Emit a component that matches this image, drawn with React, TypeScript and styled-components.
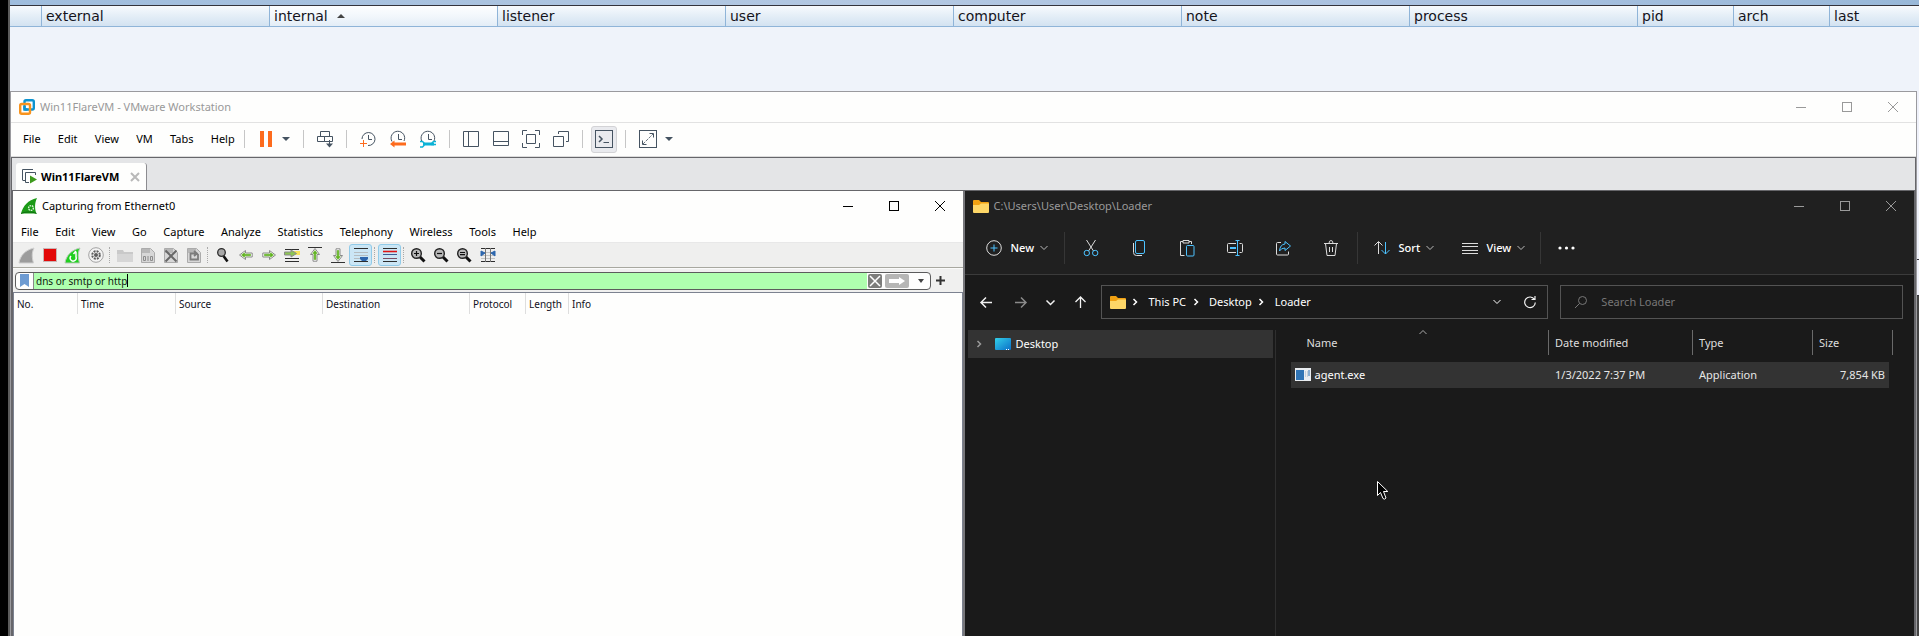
import React from "react";
import styled, { createGlobalStyle, css } from "styled-components";

const GlobalStyle = createGlobalStyle`
  * { box-sizing: border-box; }
  body { margin: 0; background: #000; font-family: "Noto Sans", "Open Sans", sans-serif; font-size: 11px; line-height: 16px; }
  button { font: inherit; color: inherit; background: none; border: 0; padding: 0; cursor: default; }
  svg { display: block; flex: none; overflow: visible; }
`;

/* ---------- desktop behind the windows ---------- */

const Page = styled.div`
  min-height: 100vh;
  display: flex;
  flex-direction: column;
  margin-left: 8px;
  border-left: 2px solid #5a5a5a;
  background: #eff3fa;
  overflow: hidden;
`;
const TopStrip = styled.div`
  height: 6px;
  background: linear-gradient(90deg, #9fbddd, #b3c8e2 45%, #a9c1e0 75%, #98b8d8);
  border-bottom: 1px solid #33333b;
`;
const SessionTable = styled.table`
  width: 100%;
  table-layout: fixed;
  border-collapse: separate;
  border-spacing: 0;
  margin-bottom: 64px;
`;
const SessionHead = styled.th<{ $sorted?: boolean }>`
  height: 21px;
  padding: 0 4px;
  border-right: 1px solid #8fb4d8;
  border-bottom: 1px solid #8fb4d8;
  background: ${(p) =>
    p.$sorted
      ? "linear-gradient(#fdfeff, #f2f7fc 50%, #e3edf7)"
      : "linear-gradient(#f7fafd, #e4eef7 50%, #d3e2f1)"};
  color: #14141c;
  font: 400 14px/18px "DejaVu Sans", sans-serif;
  text-align: left;
  white-space: nowrap;
  &:last-child { border-right: 0; }
`;
const SortMark = styled.span`
  display: inline-block;
  margin: 0 0 3px 9px;
  border: 4px solid transparent;
  border-top: 0;
  border-bottom-color: #444;
`;
const WindowRow = styled.div`
  flex: 1;
  display: flex;
`;
const Behind = styled.div`
  flex: none;
  width: 2px;
  display: flex;
  flex-direction: column;
`;
const BehindLight = styled.div<{ $h: number }>`
  height: ${(p) => p.$h}px;
  background: #eff1fa;
  border-bottom: 1px solid #33333b;
`;
const BehindDark = styled.div`
  flex: 1;
  background: #444;
`;

/* ---------- shared window parts ---------- */

const TitleBar = styled.header<{ $color: string }>`
  flex: none;
  display: flex;
  align-items: center;
  height: 30px;
  padding-left: 8px;
  color: ${(p) => p.$color};
`;
const Title = styled.h1`
  flex: 1;
  margin: 0 0 0 5px;
  font-size: 11px;
  font-weight: 400;
  white-space: nowrap;
`;
const ControlButton = styled.button`
  width: 46px;
  height: 28px;
  display: grid;
  place-items: center;
`;
const Menu = styled.nav<{ $width: number }>`
  flex: none;
  display: flex;
  align-items: center;
  width: ${(p) => p.$width}px;
`;
const MenuItem = styled.button`
  flex: 1 1 auto;
  padding: 0 8px;
  text-align: left;
  white-space: nowrap;
`;

function WindowControls() {
  return (
    <>
      <ControlButton aria-label="Minimize">
        <svg width="10" height="10" stroke="currentColor"><path d="M0 5.5H10" /></svg>
      </ControlButton>
      <ControlButton aria-label="Maximize">
        <svg width="10" height="10" stroke="currentColor" fill="none"><rect x=".5" y=".5" width="9" height="9" /></svg>
      </ControlButton>
      <ControlButton aria-label="Close">
        <svg width="10" height="10" stroke="currentColor"><path d="M0 0L10 10M10 0L0 10" /></svg>
      </ControlButton>
    </>
  );
}

/* ---------- VMware ---------- */

const VmWindow = styled.main`
  flex: 1;
  min-width: 0;
  display: flex;
  flex-direction: column;
  border: 1px solid #9a9a9e;
  border-bottom: 0;
  background: #fefefd;
`;
const VmToolbar = styled.div`
  flex: none;
  display: flex;
  align-items: center;
  height: 35px;
  padding: 0 4px 1px;
  border-top: 1px solid #e2e2e2;
  border-bottom: 1px solid #dcdcdc;
`;
const VmGroup = styled.div<{ $tight?: boolean; $caret?: boolean }>`
  flex: none;
  display: flex;
  align-items: center;
  gap: ${(p) => (p.$caret ? 8 : 14)}px;
  height: 18px;
  padding: 0 ${(p) => (p.$tight ? 8 : 13)}px;
  border-left: 1px solid #c6c6c6;
`;
const VmTool = styled.button<{ $pressed?: boolean }>`
  flex: none;
  display: grid;
  place-items: center;
  color: #455361;
  ${(p) =>
    p.$pressed &&
    css`
      width: 26px;
      height: 27px;
      background: #e9eaee;
      border: 1px solid #d3d3d6;
      border-radius: 3px;
    `}
`;
const VmBody = styled.section`
  flex: 1;
  display: flex;
  flex-direction: column;
  border: 1px solid #66666a;
  border-bottom: 0;
  background: #e4e5e7;
`;
const TabStrip = styled.div`
  display: flex;
  align-items: flex-end;
  height: 32px;
  padding-left: 4px;
`;
const Tab = styled.div`
  display: flex;
  align-items: center;
  height: 27px;
  width: 131px;
  padding: 0 7px 0 6px;
  border-right: 1px solid #8c8c90;
  border-radius: 3px 3px 0 0;
  background: #fefefd;
  color: #000;
`;
const TabLabel = styled.button`
  flex: 1;
  display: flex;
  align-items: center;
  gap: 4px;
  font: 700 11px/16px "Noto Sans", sans-serif;
  white-space: nowrap;
`;
const Guest = styled.div`
  flex: 1;
  display: flex;
  border: 1px solid #66666a;
  border-bottom: 0;
`;

const Clock = ({ children }: { children: React.ReactNode }) => (
  <svg width="16" height="18" fill="none" stroke="currentColor">
    <path d="M2 11.5A6.8 6.8 0 1 1 14 11M8.5 4V9.5H12" />
    {children}
  </svg>
);
const Caret = ({ color = "#455361" }: { color?: string }) => (
  <svg width="8" height="4" fill={color}><path d="M0 0H8L4 4Z" /></svg>
);

const vmMenu = ["File", "Edit", "View", "VM", "Tabs", "Help"];

function VmChrome() {
  return (
    <VmToolbar>
      <Menu $width={229}>{vmMenu.map((m) => <MenuItem key={m}>{m}</MenuItem>)}</Menu>
      <VmGroup $caret>
        <VmTool aria-label="Suspend">
          <svg width="16" height="16" fill="#fd6b1d"><path d="M2 0H6V16H2ZM10 0H14V16H10Z" /></svg>
        </VmTool>
        <VmTool aria-label="Power options"><Caret /></VmTool>
      </VmGroup>
      <VmGroup>
        <VmTool aria-label="Send Ctrl+Alt+Del">
          <svg width="16" height="16" fill="none" stroke="currentColor">
            <path d="M3.500 5.500V.5H12.500V5.500M.5 5.500H7.500V10.500H.5ZM7.500 5.500H15.500V10.500H7.500ZM12.500 9V14" />
            <path d="M9 12.500H16L12.500 16.500Z" fill="currentColor" stroke="none" />
          </svg>
        </VmTool>
      </VmGroup>
      <VmGroup>
        <VmTool aria-label="Take snapshot">
          <svg width="16" height="18" fill="none" stroke="currentColor">
            <path d="M2 9A6.500 6.500 0 1 1 8 15.500M8.500 5V9.500H12" />
            <path d="M0 13.500H7M3.500 10V17" stroke="#fd6b1d" />
          </svg>
        </VmTool>
        <VmTool aria-label="Revert snapshot">
          <Clock><path d="M0 14L4.500 10.500V12.500H16V15.500H4.500V17.500Z" fill="#fd6b1d" stroke="none" /></Clock>
        </VmTool>
        <VmTool aria-label="Manage snapshots">
          <Clock>
            <path d="M3 14H14" stroke="#0bb2d6" strokeWidth="3" />
            <path d="M0 11.500H2.500L4 13V15.500L2.500 17H0M16 11.500H13.500L12 13V14.500H16" stroke="#0bb2d6" strokeWidth="1.500" />
          </Clock>
        </VmTool>
      </VmGroup>
      <VmGroup>
        <VmTool aria-label="Show library">
          <svg width="16" height="16" fill="none" stroke="currentColor"><path d="M.5 .5H15.500V15.500H.5ZM5.500 .5V15.500" /></svg>
        </VmTool>
        <VmTool aria-label="Show thumbnail bar">
          <svg width="16" height="16" fill="none" stroke="currentColor"><path d="M.5 .5H15.500V14.500H.5ZM.5 10.500H15.500" /></svg>
        </VmTool>
        <VmTool aria-label="Full screen">
          <svg width="16" height="16" fill="none" stroke="currentColor">
            <path d="M3.500 3.500H12.500V12.500H3.500ZM-.5 4V-.5H4M12 -.5H16.500V4M16.500 12V16.500H12M4 16.500H-.5V12" />
          </svg>
        </VmTool>
        <VmTool aria-label="Unity">
          <svg width="16" height="16" fill="none" stroke="currentColor">
            <path d="M.5 5.500H10.500V15.500H.5ZM5.500 3V.5H15.500V10.500H13" />
          </svg>
        </VmTool>
      </VmGroup>
      <VmGroup $tight>
        <VmTool $pressed aria-label="Console view">
          <svg width="18" height="18" fill="none" stroke="currentColor">
            <rect x=".5" y=".5" width="17" height="17" />
            <path d="M4 6L7 9L4 12" strokeWidth="1.500" /><path d="M8.500 12.500H14" />
          </svg>
        </VmTool>
      </VmGroup>
      <VmGroup $caret>
        <VmTool aria-label="Stretch guest">
          <svg width="18" height="18" fill="none" stroke="currentColor">
            <rect x=".5" y=".5" width="17" height="17" />
            <path d="M10.500 3.500H14.500V7.500M3.500 10.500V14.500H7.500" /><path d="M4 14L14 4" strokeDasharray="3 1" strokeWidth=".8" />
          </svg>
        </VmTool>
        <VmTool aria-label="Stretch options"><Caret /></VmTool>
      </VmGroup>
    </VmToolbar>
  );
}

/* ---------- Wireshark ---------- */

const Shark = styled.section`
  flex: 1 1 0;
  min-width: 0;
  display: flex;
  flex-direction: column;
  border-right: 1px solid #77777b;
  background: #fefefd;
  color: #000;
`;
const SharkMenu = styled(Menu)`
  height: 21px;
`;
const SharkToolbar = styled.div`
  flex: none;
  display: flex;
  align-items: center;
  height: 26px;
  padding-left: 2px;
  border-top: 1px solid #e8e8e8;
  border-bottom: 1px solid #a8a8a0;
  background: #efefee;
`;
const SharkTool = styled.button<{ $on?: boolean }>`
  flex: none;
  display: grid;
  place-items: center;
  width: 23px;
  height: 22px;
  ${(p) =>
    p.$on &&
    css`
      background: #cbe6f5;
      border: 1px solid #91cbe9;
      border-radius: 3px;
    `}
`;
const SharkSep = styled.span`
  flex: none;
  width: 4px;
  height: 16px;
  border-left: 1px dotted #a9a9a9;
  margin-left: 2px;
`;
const FilterBar = styled.form`
  flex: none;
  display: flex;
  align-items: center;
  height: 24px;
  padding: 0 18px 0 2px;
  gap: 5px;
  background: #f0f0ef;
  border-top: 1px solid #fafafa;
`;
const FilterBox = styled.div`
  flex: 1;
  display: flex;
  align-items: center;
  height: 18px;
  border: 1px solid #5c5c5c;
  border-radius: 4px;
  background: #fefefd;
  overflow: hidden;
`;
const Bookmark = styled.button`
  width: 18px;
  height: 16px;
  display: grid;
  place-items: center;
  border-right: 1px solid #8a8a8a;
`;
const FilterField = styled.label`
  flex: 1;
  display: flex;
  align-items: center;
  height: 16px;
  padding-left: 2px;
  background: #afffaf;
`;
const FilterInput = styled.input`
  field-sizing: content;
  min-width: 0;
  padding: 0;
  border: 0;
  outline: 0;
  background: none;
  color: #102010;
  font: 10px/14px "Noto Sans", sans-serif;
`;
const TextCaret = styled.span`
  width: 1px;
  height: 13px;
  background: #000;
`;
const FilterButton = styled.button<{ $bg: string; $w: number }>`
  width: ${(p) => p.$w}px;
  height: 14px;
  margin-left: ${(p) => (p.$w > 14 ? 3 : 1)}px;
  display: grid;
  place-items: center;
  border-radius: 2px;
  background: ${(p) => p.$bg};
`;
const PacketFrame = styled.div`
  flex: 1;
  border: 1px solid #7c8290;
  border-bottom: 0;
`;
const PacketTable = styled.table`
  width: 100%;
  table-layout: fixed;
  border-collapse: separate;
  border-spacing: 0;
`;
const PacketHead = styled.th`
  height: 21px;
  padding: 0 3px;
  border-right: 1px solid #dedede;
  font-size: 10px;
  line-height: 14px;
  font-weight: 400;
  text-align: left;
  color: #10101c;
  &:last-child { border-right: 0; }
`;

const FinPath = "M0 15C1 8 6 2 15 0C12.500 5 13 10 14.500 15Z";
const DocPath = "M.5 .5H9.500L13.500 4.500V14.500H.5Z";

const Doc = ({ children }: { children: React.ReactNode }) => (
  <svg width="14" height="15" fill="none">
    <path d={DocPath} fill="#d7d7d7" stroke="#ababab" />
    <path d="M1 1H9V5H1Z" fill="#b7b7b7" />
    {children}
  </svg>
);
const ArrowRight = ({ turn = 0, bar }: { turn?: number; bar?: string }) => (
  <svg width="14" height="16">
    {bar && <path d={bar} stroke="#333" />}
    <g transform={`rotate(${turn} 7 8)`}>
      <path d="M.8 6H7.500V3.500L13.500 8L7.500 12.500V10H.8Z" fill="#fff" stroke="#8a8a8a" />
      <path d="M2.500 7.200H8.500V5.800L11.500 8L8.500 10.200V8.800H2.500Z" fill="#5fb21e" stroke="#5fb21e" strokeWidth=".6" />
    </g>
  </svg>
);
const Magnifier = ({ sign }: { sign: string }) => (
  <svg width="15" height="15" fill="none">
    <path d="M9 9L13.500 13.500" stroke="#111" strokeWidth="3" />
    <circle cx="5.500" cy="5.500" r="4.800" fill="#b9b9b9" stroke="#222" strokeWidth="1.400" />
    <path d={sign} stroke="#111" strokeWidth="1.200" />
  </svg>
);

type SharkItem = { name: string; icon: React.ReactNode; on?: boolean } | null;
const sharkTools: SharkItem[] = [
  { name: "Start capture", icon: <svg width="15" height="15"><path d={FinPath} fill="#9c9c9c" stroke="#d0d0d0" /></svg> },
  { name: "Stop capture", icon: <svg width="14" height="14"><rect x=".5" y=".5" width="13" height="13" fill="#e30808" stroke="#c9b4b4" /></svg> },
  {
    name: "Restart capture",
    icon: (
      <svg width="15" height="15" fill="none">
        <path d={FinPath} fill="#1fd01f" stroke="#b9c9b9" />
        <path d="M6 8A3 3 0 1 0 11 9V4M11 3L8.500 6" stroke="#fff" strokeWidth="1.500" />
      </svg>
    ),
  },
  {
    name: "Capture options",
    icon: (
      <svg width="16" height="16" fill="none">
        <circle cx="8" cy="8" r="7.300" fill="#f4f4f4" stroke="#a3a3a3" />
        <circle cx="8" cy="8" r="3.800" stroke="#5e5e5e" strokeWidth="2" strokeDasharray="2 1" />
        <circle cx="8" cy="8" r="2" fill="#5e5e5e" />
      </svg>
    ),
  },
  null,
  { name: "Open", icon: <svg width="16" height="13"><path d="M0 1H6L7 3H16V13H0Z" fill="#c9c9c9" /><path d="M0 5H16V13H0Z" fill="#d6d6d6" /></svg> },
  {
    name: "Save",
    icon: (
      <Doc>
        <path d="M2.500 8.500H4.500V12.500H2.500ZM9.500 8.500H11.500V12.500H9.500ZM7 8V13" stroke="#8c8c8c" />
      </Doc>
    ),
  },
  { name: "Close file", icon: <Doc><path d="M1.500 2.500L12.500 13.500M12.500 2.500L1.500 13.500" stroke="#686868" strokeWidth="2" /></Doc> },
  { name: "Reload", icon: <Doc><path d="M11 6V11.500H3.500V5.500H9M7 3L10 5.500L7 8" stroke="#7c7c7c" strokeWidth="1.800" /></Doc> },
  null,
  {
    name: "Find packet",
    icon: (
      <svg width="12" height="15" fill="none">
        <path d="M6.500 8L10.500 13.500" stroke="#111" strokeWidth="2.600" />
        <circle cx="4.500" cy="4.500" r="3.800" fill="#a9a9a9" stroke="#2c2c2c" strokeWidth="1.300" />
      </svg>
    ),
  },
  { name: "Previous packet", icon: <ArrowRight turn={180} /> },
  { name: "Next packet", icon: <ArrowRight /> },
  {
    name: "Go to packet",
    icon: (
      <svg width="16" height="15">
        <path d="M1 1.500H15M1 10.500H15M1 13.500H15" stroke="#2e2e2e" />
        <path d="M10 3H16V7H10Z" fill="#f7e45b" />
        <path d="M.5 4H7V2L12.500 5.500L7 9V7H.5Z" fill="#8dc653" stroke="#8a8a8a" />
      </svg>
    ),
  },
  { name: "First packet", icon: <ArrowRight turn={-90} bar="M0 .5H14" /> },
  { name: "Last packet", icon: <ArrowRight turn={90} bar="M0 15.500H14" /> },
  {
    name: "Auto scroll",
    on: true,
    icon: (
      <svg width="14" height="14">
        <path d="M0 .5H14M0 13.500H14" stroke="#2e2e2e" />
        <path d="M0 4.500H14M0 7.500H14M0 10.500H14" stroke="#b5bcc0" />
        <path d="M6 9H14V11L12 13H8L6 11Z" fill="#2d66ad" />
      </svg>
    ),
  },
  null,
  {
    name: "Colorize",
    on: true,
    icon: (
      <svg width="14" height="14">
        <path d="M0 .5H14M0 13.500H14" stroke="#2e2e2e" />
        <path d="M0 3.500H14" stroke="#e01414" strokeWidth="1.600" />
        <path d="M0 6.500H14" stroke="#3b5c96" /><path d="M0 10.500H14" stroke="#7b4d63" />
      </svg>
    ),
  },
  null,
  { name: "Zoom in", icon: <Magnifier sign="M3 5.500H8M5.500 3V8" /> },
  { name: "Zoom out", icon: <Magnifier sign="M3 5.500H8" /> },
  { name: "Normal size", icon: <Magnifier sign="M3 4.500H8M3 6.700H8" /> },
  {
    name: "Resize columns",
    icon: (
      <svg width="14" height="14">
        <path d="M0 .5H14M0 13.500H14" stroke="#2e2e2e" />
        <path d="M0 4.500H14M0 7.500H14M0 10.500H14" stroke="#c3c3c3" />
        <path d="M4.500 0V14M9.500 0V14" stroke="#777" />
        <path d="M0 3L4 5L0 8ZM14 3L10 5L14 8Z" fill="#2d66ad" stroke="#2d66ad" />
      </svg>
    ),
  },
];

const sharkMenu = ["File", "Edit", "View", "Go", "Capture", "Analyze", "Statistics", "Telephony", "Wireless", "Tools", "Help"];
const packetColumns: [string, number?][] = [
  ["No.", 64], ["Time", 98], ["Source", 147], ["Destination", 147], ["Protocol", 56], ["Length", 43], ["Info"],
];

function Wireshark() {
  return (
    <Shark>
      <TitleBar $color="#000">
        <svg width="16" height="16" fill="none">
          <path d="M0 15.500C2 8 7 2 16 0C13.500 5 13.500 11 15.500 15.500Z" fill="#1b9a16" />
          <path d="M0 15.500C5 13.500 11 13.500 15.500 15.500" stroke="#0f6d10" />
          <circle cx="10" cy="10" r="2.400" stroke="#d9f3d5" strokeWidth="1.400" strokeDasharray="1.500 .7" />
        </svg>
        <Title>Capturing from Ethernet0</Title>
        <WindowControls />
      </TitleBar>
      <SharkMenu $width={532}>{sharkMenu.map((m) => <MenuItem key={m}>{m}</MenuItem>)}</SharkMenu>
      <SharkToolbar>
        {sharkTools.map((t, i) =>
          t ? <SharkTool key={t.name} $on={t.on} aria-label={t.name}>{t.icon}</SharkTool> : <SharkSep key={i} />
        )}
      </SharkToolbar>
      <FilterBar onSubmit={(e) => e.preventDefault()}>
        <FilterBox>
          <Bookmark type="button" aria-label="Saved filters">
            <svg width="9" height="13" fill="#6d9bd2"><path d="M0 0H9V13L4.500 10L0 13Z" /></svg>
          </Bookmark>
          <FilterField>
            <FilterInput aria-label="Display filter" defaultValue="dns or smtp or http" />
            <TextCaret />
          </FilterField>
          <FilterButton type="button" $bg="#7d7d7b" $w={14} aria-label="Clear filter">
            <svg width="10" height="10" stroke="#fff" strokeWidth="1.500"><path d="M0 0L10 10M10 0L0 10" /></svg>
          </FilterButton>
          <FilterButton type="submit" $bg="#b6b6b5" $w={24} aria-label="Apply filter">
            <svg width="16" height="8" fill="#fff"><path d="M0 2H10V0L16 4L10 8V6H0Z" /></svg>
          </FilterButton>
          <FilterButton type="button" $bg="none" $w={18} aria-label="Filter history">
            <svg width="6" height="4" fill="#444"><path d="M0 0H6L3 4Z" /></svg>
          </FilterButton>
        </FilterBox>
        <button type="button" aria-label="Add filter button">
          <svg width="9" height="9" stroke="#333" strokeWidth="2"><path d="M4.500 0V9M0 4.500H9" /></svg>
        </button>
      </FilterBar>
      <PacketFrame>
        <PacketTable>
          <colgroup>{packetColumns.map(([c, w]) => <col key={c} width={w} />)}</colgroup>
          <thead>
            <tr>{packetColumns.map(([c]) => <PacketHead key={c} scope="col">{c}</PacketHead>)}</tr>
          </thead>
        </PacketTable>
      </PacketFrame>
    </Shark>
  );
}

/* ---------- File Explorer ---------- */

const Explorer = styled.section`
  flex: 1 1 0;
  min-width: 0;
  display: flex;
  flex-direction: column;
  border-left: 1px solid #77777b;
  background: #1a1a1a;
  color: #fff;
`;
const ExplorerTop = styled.div`
  background: #202020;
  border-bottom: 1px solid #3b3b3b;
`;
const Commands = styled.div`
  display: flex;
  align-items: center;
  height: 53px;
  padding: 1px 0 0 7px;
`;
const TextCommand = styled.button<{ $width: number }>`
  flex: none;
  display: flex;
  align-items: center;
  gap: 9px;
  width: ${(p) => p.$width}px;
  height: 32px;
  padding: 0 14px;
`;
const TextChevron = styled.span`
  display: flex;
  align-items: center;
  gap: 6px;
  font-weight: 500;
`;
const IconCommand = styled.button`
  flex: none;
  width: 48px;
  height: 32px;
  display: grid;
  place-items: center;
`;
const CommandSep = styled.span`
  flex: none;
  width: 1px;
  height: 32px;
  margin: 0 2px;
  background: #363636;
`;
const AddressRow = styled.div`
  flex: none;
  display: flex;
  align-items: center;
  padding: 10px 11px 11px 3px;
`;
const NavButtons = styled.div`
  flex: none;
  display: flex;
  margin-right: 3px;
`;
const NavButton = styled.button<{ $dim?: boolean; $w: number }>`
  width: ${(p) => p.$w}px;
  height: 32px;
  display: grid;
  place-items: center;
  color: ${(p) => (p.$dim ? "#8a8a8a" : "#f2f2f2")};
`;
const AddressBox = styled.nav`
  flex: 427 1 0;
  display: flex;
  align-items: center;
  height: 34px;
  margin-right: 12px;
  padding: 0 10px 0 8px;
  border: 1px solid #535353;
`;
const Crumb = styled.a`
  color: #fff;
  text-decoration: none;
  white-space: nowrap;
`;
const CrumbChevron = styled.span`
  display: grid;
  place-items: center;
  width: 23px;
  padding-right: 3px;
`;
const AddressEnd = styled.div`
  display: flex;
  margin-left: auto;
  gap: 20px;
`;
const SearchBox = styled.label`
  flex: 312 1 0;
  display: flex;
  align-items: center;
  gap: 14px;
  height: 34px;
  padding: 0 14px;
  border: 1px solid #535353;
  color: #777;
`;
const SearchInput = styled.input`
  flex: 1;
  min-width: 0;
  padding: 0;
  border: 0;
  outline: 0;
  background: none;
  color: #fff;
  font: 11px/16px "Noto Sans", sans-serif;
  &::placeholder { color: #777; opacity: 1; }
`;
const Panes = styled.div`
  flex: 1;
  display: flex;
`;
const Tree = styled.aside`
  flex: none;
  width: 311px;
  padding: 0 2px 0 3px;
  border-right: 1px solid #2f2f2f;
`;
const TreeItem = styled.button`
  width: 100%;
  height: 28px;
  display: flex;
  align-items: center;
  gap: 5px;
  padding-left: 9px;
  background: #333;
`;
const TreeChevron = styled.span`
  width: 13px;
  color: #9a9a9a;
`;
const Files = styled.div`
  position: relative;
  flex: 1;
  min-width: 0;
  padding: 0 21px 0 15px;
`;
const FileTable = styled.table`
  width: 100%;
  table-layout: fixed;
  border-collapse: separate;
  border-spacing: 0;
`;
const FileHead = styled.th<{ $first?: boolean }>`
  position: relative;
  height: 25px;
  padding: 0 0 0 ${(p) => (p.$first ? 16 : 6)}px;
  border-right: 1px solid #6a6a6a;
  color: #dedede;
  font-weight: 400;
  text-align: left;
`;
const SortCaret = styled.span`
  position: absolute;
  left: 8px;
  right: 0;
  top: 0;
  display: grid;
  justify-items: center;
`;
const SpacerCell = styled.td`
  height: 7px;
  padding: 0;
`;
const FileCell = styled.td<{ $first?: boolean; $end?: boolean }>`
  height: 26px;
  padding: 0 4px 0 ${(p) => (p.$first ? 4 : 6)}px;
  background: #333;
  background-clip: padding-box;
  color: #e6e6e6;
  ${(p) =>
    p.$end &&
    css`
      text-align: right;
      border-right: 4px solid transparent;
    `}
`;
const FileName = styled.span`
  display: flex;
  align-items: center;
  gap: 4px;
  color: #fff;
`;
const Pointer = styled.svg`
  position: absolute;
  left: 101px;
  top: 151px;
`;

const Folder = () => (
  <svg width="16" height="13">
    <path d="M0 1Q0 0 1 0H6L8 2H15Q16 2 16 3V6H0Z" fill="#f0a112" />
    <path d="M0 5H6L8 3.500H16V12Q16 13 15 13H1Q0 13 0 12Z" fill="#fdd667" />
  </svg>
);
const ChevronDown = ({ size = 8, color = "#bbb" }: { size?: number; color?: string }) => (
  <svg width={size} height={size / 2} viewBox="0 0 8 4" fill="none" stroke={color}><path d="M.5 0L4 3.500L7.500 0" /></svg>
);
const ChevronRight = () => (
  <svg width="5" height="8" fill="none" stroke="currentColor" strokeWidth="1.500"><path d="M.5 1L3.500 4L.5 7" /></svg>
);

const blue = "#4cc2ff";
const grey = "#dcdcdc";
const commands: [string, React.ReactNode][] = [
  ["Cut", <>
    <path d="M3.500 0L10.500 11M12.500 0L5.500 11" stroke={grey} />
    <circle cx="3.800" cy="13" r="2.700" stroke={blue} /><circle cx="12.200" cy="13" r="2.700" stroke={blue} />
  </>],
  ["Copy", <>
    <path d="M2.500 3V12.500Q2.500 15.500 5.500 15.500H11" stroke={grey} />
    <rect x="4.500" y=".5" width="9" height="13" rx="1.500" stroke={blue} />
  </>],
  ["Paste", <>
    <path d="M4 1.500H1.500V15.500H5.500M10 1.500H12.500V4M4 .5H10V3H4Z" stroke={grey} />
    <rect x="7.500" y="5.500" width="7.500" height="10.500" rx="1" stroke={blue} />
  </>],
  ["Rename", <>
    <path d="M9 3.500H1.500Q.5 3.500 .5 4.500V11.500Q.5 12.500 1.500 12.500H9M12.500 3.500H14.500Q15.500 3.500 15.500 4.500V11.500Q15.500 12.500 14.500 12.500H12.500" stroke={grey} />
    <path d="M8.500 .5H12.500M8.500 15.500H12.500M10.500 .5V15.500" stroke={blue} /><path d="M3 8H9" stroke={blue} strokeWidth="2" />
  </>],
  ["Share", <>
    <path d="M6 2.500H2.500Q1.500 2.500 1.500 3.500V14Q1.500 15 2.500 15H12.500Q13.500 15 13.500 14V11.500" stroke={grey} />
    <path d="M10 1.500L15.500 6L10 10.500V8Q6 8 4.500 11Q5 4.500 10 4Z" stroke={blue} />
  </>],
  ["Delete", <>
    <path d="M1 3.500H15M2.500 3.500L4 15.500H12L13.500 3.500M6 3.500Q6 .5 8 .5T10 3.500M6.500 7V12M9.500 7V12" stroke={grey} />
  </>],
];
const fileColumns: [string, number?][] = [["Name"], ["Date modified", 144], ["Type", 120], ["Size", 80]];

function FileExplorer() {
  return (
    <Explorer>
      <ExplorerTop>
        <TitleBar $color="#9a9a9a">
          <Folder />
          <Title>C:\Users\User\Desktop\Loader</Title>
          <WindowControls />
        </TitleBar>
        <Commands>
          <TextCommand $width={90}>
            <svg width="16" height="16" fill="none"><circle cx="8" cy="8" r="7.300" stroke={grey} /><path d="M8 4.500V11.500M4.500 8H11.500" stroke={blue} /></svg>
            <TextChevron>New <ChevronDown /></TextChevron>
          </TextCommand>
          <CommandSep />
          {commands.map(([name, icon]) => (
            <IconCommand key={name} aria-label={name}><svg width="16" height="16" fill="none">{icon}</svg></IconCommand>
          ))}
          <CommandSep />
          <TextCommand $width={88}>
            <svg width="16" height="14" fill="none"><path d="M4.500 13V1M.5 4.500L4.500 .5L8.500 4.500" stroke={grey} /><path d="M11.500 1V13M7.500 9L11.500 13L15.500 9" stroke={blue} /></svg>
            <TextChevron>Sort <ChevronDown /></TextChevron>
          </TextCommand>
          <TextCommand $width={90}>
            <svg width="16" height="11" stroke={grey}><path d="M0 .5H16M0 3.500H16M0 7.500H16M0 10.500H16" /></svg>
            <TextChevron>View <ChevronDown /></TextChevron>
          </TextCommand>
          <CommandSep />
          <IconCommand aria-label="See more">
            <svg width="17" height="4" fill="#fff"><circle cx="2" cy="2" r="1.600" /><circle cx="8.500" cy="2" r="1.600" /><circle cx="15" cy="2" r="1.600" /></svg>
          </IconCommand>
        </Commands>
      </ExplorerTop>
      <AddressRow>
        <NavButtons>
          <NavButton $w={36} aria-label="Back">
            <svg width="12" height="11" fill="none" stroke="currentColor" strokeWidth="1.500"><path d="M12 5.500H1M6 .5L1 5.500L6 10.500" /></svg>
          </NavButton>
          <NavButton $w={34} $dim aria-label="Forward">
            <svg width="12" height="11" fill="none" stroke="currentColor" strokeWidth="1.500"><path d="M0 5.500H11M6 .5L11 5.500L6 10.500" /></svg>
          </NavButton>
          <NavButton $w={26} aria-label="Recent locations">
            <svg width="9" height="5" fill="none" stroke="currentColor" strokeWidth="1.500"><path d="M.5 .5L4.500 4.500L8.500 .5" /></svg>
          </NavButton>
          <NavButton $w={34} aria-label="Up">
            <svg width="11" height="12" fill="none" stroke="currentColor" strokeWidth="1.300"><path d="M5.500 12V1M.5 6L5.500 1L10.500 6" /></svg>
          </NavButton>
        </NavButtons>
        <AddressBox aria-label="Address">
          <Folder />
          <CrumbChevron><ChevronRight /></CrumbChevron>
          <Crumb href="#pc">This PC</Crumb>
          <CrumbChevron><ChevronRight /></CrumbChevron>
          <Crumb href="#desktop">Desktop</Crumb>
          <CrumbChevron><ChevronRight /></CrumbChevron>
          <Crumb href="#loader">Loader</Crumb>
          <AddressEnd>
            <NavButton $w={12} aria-label="Previous locations"><ChevronDown color="#fff" /></NavButton>
            <NavButton $w={14} aria-label="Refresh">
              <svg width="12" height="12" fill="none" stroke="currentColor" strokeWidth="1.200"><path d="M10.500 3.500A5.300 5.300 0 1 0 11.300 6.500M11 0V3.500H7.500" /></svg>
            </NavButton>
          </AddressEnd>
        </AddressBox>
        <SearchBox>
          <svg width="12" height="12" fill="none" stroke="currentColor"><circle cx="7.500" cy="4.500" r="4" /><path d="M4.500 7.500L0 12" /></svg>
          <SearchInput type="search" aria-label="Search" placeholder="Search Loader" />
        </SearchBox>
      </AddressRow>
      <Panes>
        <Tree>
          <TreeItem>
            <TreeChevron><ChevronRight /></TreeChevron>
            <svg width="16" height="13">
              <defs><linearGradient id="screen" x1="0" y1="0" x2="1" y2="1"><stop stopColor="#33d0ea" /><stop offset="1" stopColor="#0a6fc8" /></linearGradient></defs>
              <rect width="16" height="12" rx="1" fill="url(#screen)" /><path d="M11 11.500H12M13 11.500H14" stroke="#fff" />
            </svg>
            Desktop
          </TreeItem>
        </Tree>
        <Files>
          <FileTable>
            <colgroup>{fileColumns.map(([c, w]) => <col key={c} width={w} />)}</colgroup>
            <thead>
              <tr>
                {fileColumns.map(([c], i) => (
                  <FileHead key={c} scope="col" $first={i === 0}>
                    {c}
                    {i === 0 && <SortCaret><svg width="8" height="4" fill="none" stroke="#aaa"><path d="M.5 4L4 .5L7.500 4" /></svg></SortCaret>}
                  </FileHead>
                ))}
              </tr>
            </thead>
            <tbody>
              <tr><SpacerCell colSpan={4} /></tr>
              <tr>
                <FileCell $first>
                  <FileName>
                    <svg width="16" height="14"><rect width="16" height="13" fill="#e9edf1" /><rect x="1" y="2" width="8" height="10" fill="#2f74b5" /><path d="M10.500 3V9M12.500 3V9" stroke="#c4d0da" /><path d="M14 2V8" stroke="#2f74b5" /></svg>
                    agent.exe
                  </FileName>
                </FileCell>
                <FileCell>1/3/2022 7:37 PM</FileCell>
                <FileCell>Application</FileCell>
                <FileCell $end>7,854 KB</FileCell>
              </tr>
            </tbody>
          </FileTable>
          <Pointer width="12" height="20" aria-hidden="true">
            <path d="M.5 .5V14.500L3.500 11.500L6 17.500Q7.500 19 9 17L6.500 10.500H10.800Z" fill="#000" stroke="#fff" />
          </Pointer>
        </Files>
      </Panes>
    </Explorer>
  );
}

/* ---------- page ---------- */

const sessionColumns: [string, number?][] = [
  ["", 32], ["external", 228], ["internal", 228], ["listener", 228], ["user", 228], ["computer", 228],
  ["note", 228], ["process", 228], ["pid", 96], ["arch", 96], ["last", 89],
];

export default function App() {
  return (
    <>
      <GlobalStyle />
      <Page>
        <TopStrip />
        <SessionTable>
          <colgroup>{sessionColumns.map(([c, w]) => <col key={c} width={w} />)}</colgroup>
          <thead>
            <tr>
              {sessionColumns.map(([c]) => (
                <SessionHead key={c} scope="col" $sorted={c === "internal"}>
                  {c}{c === "internal" && <SortMark />}
                </SessionHead>
              ))}
            </tr>
          </thead>
        </SessionTable>
        <WindowRow>
          <VmWindow>
            <TitleBar $color="#999">
              <svg width="16" height="16" fill="none" strokeWidth="2.400">
                <rect x="5.500" y="1.200" width="9.300" height="9.300" rx="1.500" stroke="#0d93cf" />
                <rect x="1.200" y="5" width="9.800" height="9.800" rx="1.500" stroke="#f7931d" />
                <path d="M5.500 7V10.500H8.500" stroke="#0d93cf" />
              </svg>
              <Title>Win11FlareVM - VMware Workstation</Title>
              <WindowControls />
            </TitleBar>
            <VmChrome />
            <VmBody>
              <TabStrip>
                <Tab>
                  <TabLabel>
                    <svg width="15" height="15" fill="none" stroke="#455361">
                      <path d="M.5 11V.5H11M3 11.500H.5M7 13.500H3.500V3.500H13.500V6" />
                      <path d="M8 6.500L15 10.500L8 14.500Z" fill="#3d9a1c" stroke="none" />
                    </svg>
                    Win11FlareVM
                  </TabLabel>
                  <button aria-label="Close tab">
                    <svg width="8" height="8" stroke="#b9b9b9" strokeWidth="2"><path d="M0 0L8 8M8 0L0 8" /></svg>
                  </button>
                </Tab>
              </TabStrip>
              <Guest>
                <Wireshark />
                <FileExplorer />
              </Guest>
            </VmBody>
          </VmWindow>
          <Behind>
            <BehindLight $h={169} />
            <BehindLight $h={36} />
            <BehindDark />
          </Behind>
        </WindowRow>
      </Page>
    </>
  );
}
